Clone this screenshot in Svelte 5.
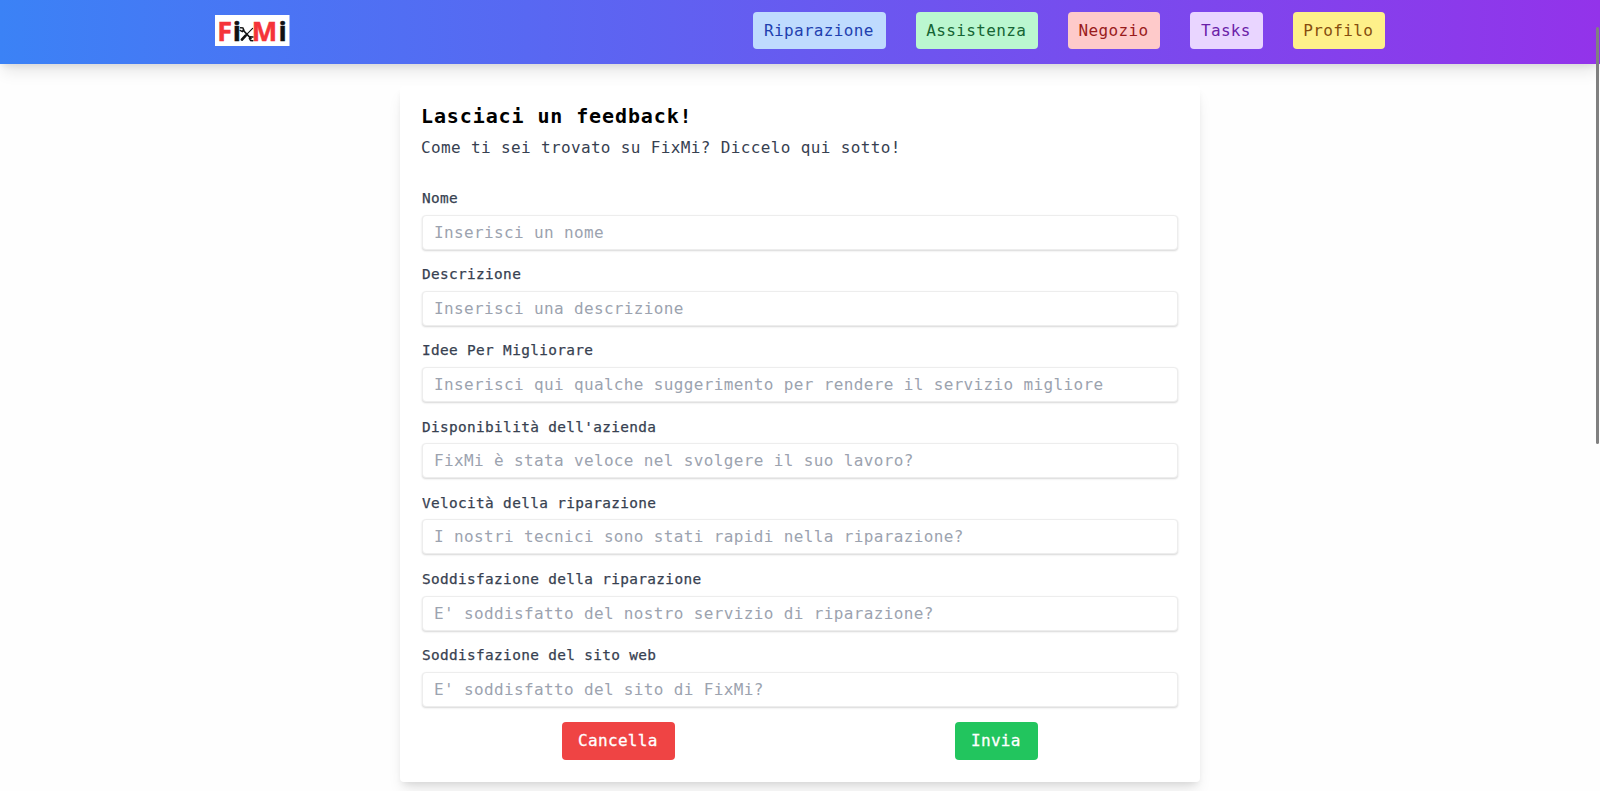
<script>
  const links = [
    { label: 'Riparazione', tone: 'blue' },
    { label: 'Assistenza', tone: 'green' },
    { label: 'Negozio', tone: 'red' },
    { label: 'Tasks', tone: 'purple' },
    { label: 'Profilo', tone: 'yellow' }
  ];

  const fields = [
    { label: 'Nome', hint: 'Inserisci un nome' },
    { label: 'Descrizione', hint: 'Inserisci una descrizione' },
    { label: 'Idee Per Migliorare', hint: 'Inserisci qui qualche suggerimento per rendere il servizio migliore' },
    { label: "Disponibilità dell'azienda", hint: 'FixMi è stata veloce nel svolgere il suo lavoro?' },
    { label: 'Velocità della riparazione', hint: 'I nostri tecnici sono stati rapidi nella riparazione?' },
    { label: 'Soddisfazione della riparazione', hint: "E' soddisfatto del nostro servizio di riparazione?" },
    { label: 'Soddisfazione del sito web', hint: "E' soddisfatto del sito di FixMi?" }
  ];
</script>

<div class="page">
  <header>
    <div class="bar">
      <svg class="logo" viewBox="0 0 74.5 31" width="74.5" height="31">
        <rect width="74.5" height="31" fill="#fff" />
        <g font-family="Open Sans, sans-serif" font-weight="700" font-size="27" stroke-width="0.5">
          <text x="2.2" y="26" fill="#f5333a" stroke="#f5333a">F</text>
          <text x="17.8" y="26" fill="#111" stroke="#111">i</text>
          <text x="36.8" y="26" fill="#f5333a" stroke="#f5333a">M</text>
          <text x="63.6" y="26" fill="#111" stroke="#111">i</text>
        </g>
        <g fill="none" stroke="#111" stroke-linecap="round">
          <path d="M28.2 15.2L36 23.6" stroke-width="1.6" />
          <path d="M25.5 12.8l2.4.1 1 2.2-1.5 1.5-2.3-1.2" stroke-width="1.4" />
          <path d="M38 22l-2.4-.2-1.2 1.8 1.2 2 2.2.1" stroke-width="1.4" />
          <path d="M37.6 13.3L31 20.2" stroke-width="1.1" />
          <path d="M30.6 20.6l-3.7 4" stroke-width="2.7" />
        </g>
      </svg>
      <nav>
        {#each links as link}
          <a class={link.tone} href="#top">{link.label}</a>
        {/each}
      </nav>
    </div>
  </header>

  <main>
    <form>
      <h1>Lasciaci un feedback!</h1>
      <p>Come ti sei trovato su FixMi? Diccelo qui sotto!</p>
      <div class="fields">
        {#each fields as field}
          <label>
            <span>{field.label}</span>
            <input type="text" placeholder={field.hint} />
          </label>
        {/each}
      </div>
      <div class="actions">
        <button class="cancel" type="button">Cancella</button>
        <button class="send" type="button">Invia</button>
      </div>
    </form>
  </main>
  <div class="thumb"></div>
</div>

<style>
  :global(body) {
    background: #fefefe;
    overflow: hidden;
  }
  .page {
    position: relative;
    height: 791px;
    overflow: hidden;
    font: 16px/24px 'DejaVu Sans Mono', monospace;
    letter-spacing: 0.36px;
  }
  .page * {
    box-sizing: border-box;
  }
  header {
    height: 64px;
    background: linear-gradient(90deg, #3b82f6, #9333ea);
    box-shadow: 0 10px 15px -3px rgba(0, 0, 0, 0.1), 0 4px 6px -2px rgba(0, 0, 0, 0.08);
  }
  .bar {
    width: 1170px;
    height: 60px;
    margin: 0 auto;
    display: flex;
    align-items: center;
    justify-content: space-between;
  }
  .logo {
    display: block;
    overflow: visible;
    letter-spacing: 0;
  }
  nav {
    display: flex;
    gap: 30px;
  }
  nav a {
    height: 37px;
    padding: 0 11.8px 0 10.6px;
    line-height: 38px;
    border-radius: 4px;
    text-decoration: none;
  }
  .blue { background: #bfdbfe; color: #1e40af; }
  .green { background: #bbf7d0; color: #166534; }
  .red { background: #fecaca; color: #991b1b; }
  .purple { background: #e9d5ff; color: #6b21a8; }
  .yellow { background: #fef08a; color: #854d0e; }
  main {
    display: flex;
    justify-content: center;
    padding-top: 22px;
  }
  form {
    width: 800px;
    height: 696px;
    padding: 16px 22px 0;
    background: #fff;
    border-radius: 4px;
    box-shadow: 0 10px 15px -3px rgba(0, 0, 0, 0.1), 0 4px 6px -2px rgba(0, 0, 0, 0.08);
  }
  h1 {
    margin: 0 0 0 -1px;
    font-size: 20px;
    line-height: 28px;
    letter-spacing: 0.89px;
    color: #000;
  }
  p {
    margin: 6px 0 26px -1px;
    color: #374151;
  }
  .fields {
    display: flex;
    flex-direction: column;
  }
  label {
    display: flex;
    flex-direction: column;
    height: 76.2px;
  }
  label span {
    height: 28.6px;
    line-height: 25px;
    font-size: 14.4px;
    letter-spacing: 0.35px;
    color: #374151;
    -webkit-text-stroke: 0.25px #374151;
  }
  input {
    height: 35px;
    width: 100%;
    padding: 0 11px;
    border: 1px solid #ededed;
    border-radius: 4px;
    outline: none;
    background: #fff;
    font: inherit;
    letter-spacing: 0.36px;
    box-shadow: 0 1px 2px rgba(0, 0, 0, 0.16);
  }
  input::placeholder {
    color: #9ca3af;
    opacity: 1;
  }
  .actions {
    display: flex;
    justify-content: space-around;
    margin-top: 2.6px;
  }
  button {
    height: 38px;
    padding: 0 16.8px 0 15.6px;
    border: 0;
    border-radius: 4px;
    color: #fff;
    font: inherit;
    letter-spacing: 0.36px;
    -webkit-text-stroke: 0.3px #fff;
  }
  .cancel { background: #ef4444; }
  .send { background: #22c55e; }
  .thumb {
    position: absolute;
    top: 27px;
    right: 1px;
    width: 3px;
    height: 417px;
    border-radius: 2px;
    background: #808080;
  }
</style>
